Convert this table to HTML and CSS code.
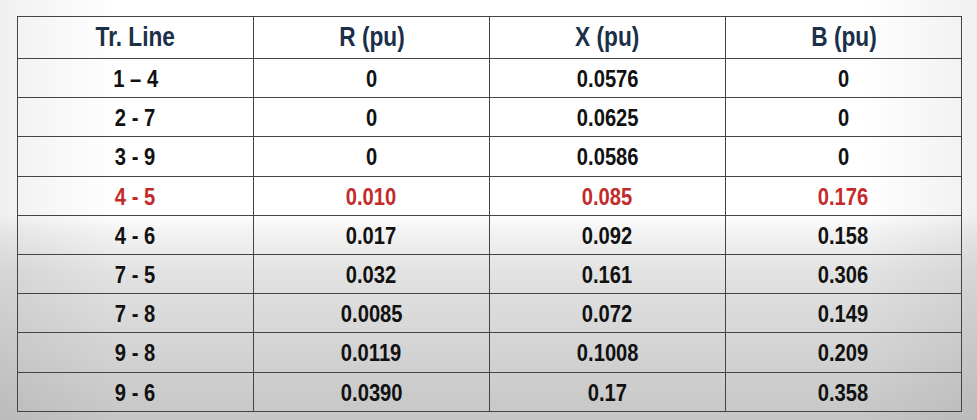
FILE: index.html
```html
<!DOCTYPE html>
<html>
<head>
<meta charset="utf-8">
<link rel="stylesheet" href="styles.css">
</head>
<body>
<div class="page">
  <table class="lines">
    <thead>
      <tr><th><span>Tr. Line</span></th><th><span>R (pu)</span></th><th><span>X (pu)</span></th><th><span>B (pu)</span></th></tr>
    </thead>
    <tbody>
      <tr><td><span>1 – 4</span></td><td><span>0</span></td><td><span>0.0576</span></td><td><span>0</span></td></tr>
      <tr><td><span>2 - 7</span></td><td><span>0</span></td><td><span>0.0625</span></td><td><span>0</span></td></tr>
      <tr><td><span>3 - 9</span></td><td><span>0</span></td><td><span>0.0586</span></td><td><span>0</span></td></tr>
      <tr class="hl"><td><span>4 - 5</span></td><td><span>0.010</span></td><td><span>0.085</span></td><td><span>0.176</span></td></tr>
      <tr><td><span>4 - 6</span></td><td><span>0.017</span></td><td><span>0.092</span></td><td><span>0.158</span></td></tr>
      <tr><td><span>7 - 5</span></td><td><span>0.032</span></td><td><span>0.161</span></td><td><span>0.306</span></td></tr>
      <tr><td><span>7 - 8</span></td><td><span>0.0085</span></td><td><span>0.072</span></td><td><span>0.149</span></td></tr>
      <tr><td><span>9 - 8</span></td><td><span>0.0119</span></td><td><span>0.1008</span></td><td><span>0.209</span></td></tr>
      <tr><td><span>9 - 6</span></td><td><span>0.0390</span></td><td><span>0.17</span></td><td><span>0.358</span></td></tr>
    </tbody>
  </table>
</div>
</body>
</html>
```
FILE: styles.css
```css
html, body {
  margin: 0;
  padding: 0;
}
body {
  width: 977px;
  height: 420px;
  overflow: hidden;
  background:
    linear-gradient(to right, rgba(0,0,0,0.06) 0%, rgba(0,0,0,0) 12%, rgba(0,0,0,0) 88%, rgba(0,0,0,0.06) 100%),
    linear-gradient(to bottom, #ffffff 0%, #ffffff 51%, #f3f3f3 55%, #e2e2e2 65%, #d6d6d6 80%, #c6c6c6 100%);
}
.page {
  padding: 16px 0 0 17px;
}
.lines {
  border-collapse: collapse;
  font-family: "Liberation Sans", Arial, sans-serif;
  font-weight: bold;
  table-layout: fixed;
  width: 942px;
}
.lines th, .lines td {
  border: 1.5px solid #444;
  text-align: center;
  padding: 0;
  width: 235px;
}
.lines span {
  display: inline-block;
  transform: scaleX(0.84);
  white-space: nowrap;
}
.lines th {
  height: 41px;
  font-size: 27px;
  color: #1b3048;
}
.lines td {
  height: 36.2px;
  padding-top: 2px;
  font-size: 24px;
  color: #111;
}
.lines tr.hl td {
  color: #c42a2a;
}
```
